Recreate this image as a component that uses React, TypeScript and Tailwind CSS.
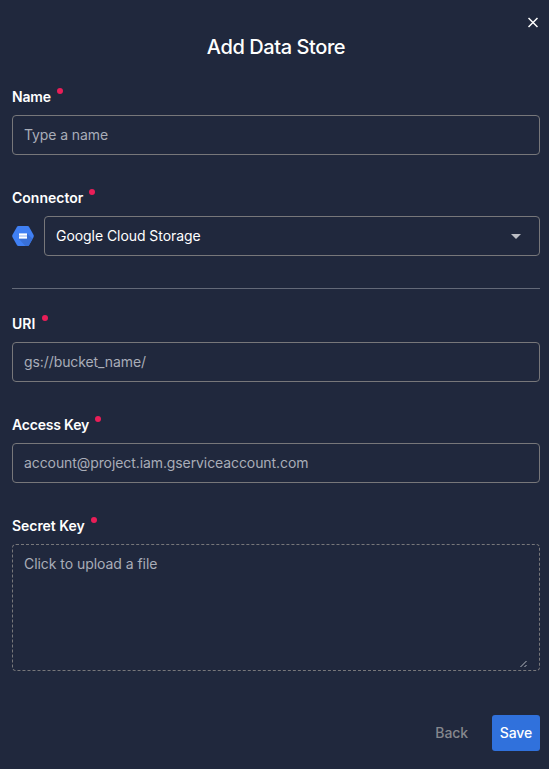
import React from "react";

type FieldLabelProps = { text: string; spacing?: string; tracking?: string };

function FieldLabel({ text, spacing = "gap-[6px]", tracking = "tracking-normal" }: FieldLabelProps) {
  return (
    <div className={`flex h-5 items-start ${spacing}`}>
      <span className={`text-sm leading-5 font-semibold text-white ${tracking}`}>{text}</span>
      <span className="mt-[1px] size-[6px] rounded-full bg-[#e91e58]" />
    </div>
  );
}

type TextFieldProps = {
  label: string;
  placeholder: string;
  labelSpacing?: string;
  labelTracking?: string;
};

function TextField({ label, placeholder, labelSpacing, labelTracking }: TextFieldProps) {
  return (
    <div className="flex flex-col gap-2">
      <FieldLabel text={label} spacing={labelSpacing} tracking={labelTracking} />
      <input
        type="text"
        placeholder={placeholder}
        className="h-10 w-full rounded-[4px] border border-[#77777a] bg-transparent px-[11px] pb-[2px] text-sm tracking-[-0.09px] text-white outline-none placeholder:text-[#a9adb8]"
      />
    </div>
  );
}

function StorageIcon() {
  return (
    <svg width="22" height="20" viewBox="0 0 22 20" className="shrink-0">
      <path
        d="M6.4 0h9.2c.6 0 1.1.3 1.4.8l4.6 8.3c.3.6.3 1.2 0 1.8L17 19.2c-.3.5-.8.8-1.4.8H6.4c-.6 0-1.1-.3-1.4-.8L.4 10.900c-.3-.6-.3-1.200 0-1.800L5 .8C5.300.3 5.800 0 6.400 0z"
        fill="#4080f4"
      />
      <path d="M15 7.500l5.600 5.300L17 19.200c-.3.5-.8.8-1.400.8h-2.300L7 13z" fill="#3970d7" />
      <rect x="7" y="7.500" width="8" height="5" fill="#8cb0f5" />
      <rect x="7" y="7.500" width="8" height="2" fill="#fff" />
      <rect x="7" y="10.500" width="8" height="2" fill="#fff" />
    </svg>
  );
}

export default function App() {
  return (
    <main className="flex h-[769px] w-[549px] flex-col bg-[#20283d] pr-[9px] pl-3 font-['Inter',sans-serif] text-white">
      <header className="flex flex-col">
        <div className="flex h-[35px] justify-end pt-[17px] pr-[2px]">
          <button type="button" aria-label="Close" className="size-[10px]">
            <svg width="10" height="11" viewBox="0 0 10 11" stroke="#fff" strokeWidth="1.5">
              <path d="M.5 1l9 9M9.500 1l-9 9" />
            </svg>
          </button>
        </div>
        <h1 className="h-6 text-center text-xl leading-6 font-medium tracking-[-0.42px]">Add Data Store</h1>
      </header>

      <form className="mt-7 flex flex-col">
        <TextField
          label="Name"
          placeholder="Type a name"
          labelSpacing="gap-[6px]"
          labelTracking="tracking-[-0.15px]"
        />

        <div className="mt-[33px] flex flex-col gap-2">
          <FieldLabel text="Connector" />
          <div className="flex items-center gap-[10px]">
            <StorageIcon />
            <div className="flex h-10 flex-1 items-center justify-between rounded-[4px] border border-[#77777a] pr-[18px] pl-[11px]">
              <span className="text-sm tracking-[-0.06px]">Google Cloud Storage</span>
              <svg width="10" height="5" viewBox="0 0 10 5">
                <path d="M0 0h10L5 5z" fill="#bcbec5" />
              </svg>
            </div>
          </div>
        </div>

        <hr className="mt-8 mb-[25px] border-t border-[#636978]" />

        <TextField label="URI" placeholder="gs://bucket_name/" labelSpacing="gap-[7px]" />
        <div className="mt-[33px]">
          <TextField
            label="Access Key"
            placeholder="account@project.iam.gserviceaccount.com"
            labelTracking="tracking-[-0.2px]"
          />
        </div>
        <div className="mt-[33px] flex flex-col gap-2">
          <FieldLabel text="Secret Key" tracking="tracking-[-0.05px]" />
          <div className="flex h-[127px] justify-between rounded-[4px] border border-dashed border-[#77777a] pt-[9px] pr-[11px] pb-[2px] pl-[11px]">
            <span className="text-sm leading-5 tracking-[-0.05px] text-[#a9adb8]">Click to upload a file</span>
            <svg width="8" height="8" viewBox="0 0 8 8" className="self-end" stroke="#c5c8cf" strokeWidth="0.9">
              <path d="M.5 7L6.500 1M4.500 7l2-2" />
            </svg>
          </div>
        </div>

        <footer className="mt-11 flex items-center justify-end gap-6 text-sm font-medium">
          <button type="button" className="tracking-[-0.1px] text-[#85878d]">Back</button>
          <button type="button" className="h-9 w-12 rounded-[3px] bg-[#3071dc] tracking-[-0.1px] text-white">Save</button>
        </footer>
      </form>
    </main>
  );
}
